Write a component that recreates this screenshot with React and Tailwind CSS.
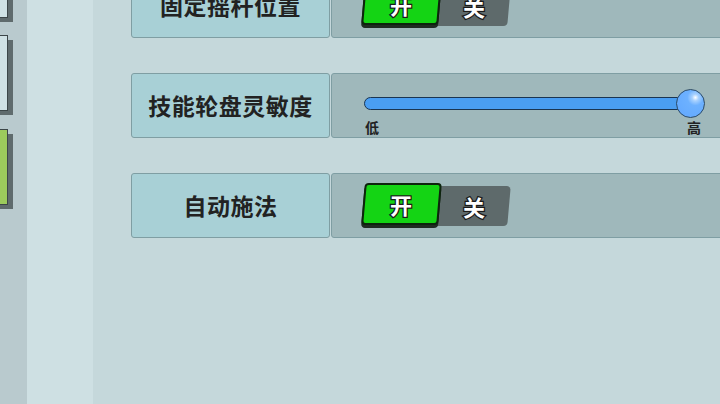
const cjk = { fontFamily: '"Noto Sans CJK SC", "Noto Sans", sans-serif' };

const Tab = ({ fill, className }) => (
  <div className={`relative w-[13px] shrink-0 ${className}`}>
    <div className="absolute left-0 top-[5px] w-[13px] bottom-[-4px] bg-[#5f6b6d]" />
    <div className={`relative h-full w-[8px] border-y border-r border-[#3c4648] ${fill}`} />
  </div>
);

const Toggle = () => (
  <div className="flex items-start pt-[9px] pl-[31px]">
    <div className="relative z-10 flex h-[42px] w-[77px] -skew-x-[5deg] items-center justify-center rounded-[4px] border-2 border-[#0d240d] bg-[#14d414] shadow-[0_3px_0_#1f2b22]">
      <span className="skew-x-[5deg] text-[22px] font-bold text-white [-webkit-text-stroke:2.5px_#1b1b1b] [paint-order:stroke_fill]">
        开
      </span>
    </div>
    <div className="-ml-[6px] mt-[3px] flex h-[40px] w-[75px] -skew-x-[5deg] items-center justify-center rounded-r-[4px] bg-[#5e6a6b] pl-[5px]">
      <span className="skew-x-[5deg] text-[22px] font-bold text-white [-webkit-text-stroke:2.5px_#1b1b1b] [paint-order:stroke_fill]">
        关
      </span>
    </div>
  </div>
);

const Slider = () => (
  <div className="pl-[32px] pt-[15px]">
    <div className="relative h-[29px] w-[342px]">
      <div className="absolute left-0 top-[8px] h-[13px] w-[330px] rounded-l-full border-[1.5px] border-[#1a3552] bg-[#4a9ef2]" />
      <div className="absolute left-[312px] top-0 h-[29px] w-[29px] rounded-full border-[1.5px] border-[#2b4a66] bg-[radial-gradient(circle_at_68%_28%,#ffffff_0,#a9d2ff_12%,#6db1ff_30%,#64aaff_80%)]" />
    </div>
    <div className="mt-[1px] flex w-[342px] justify-between text-[14px] font-bold leading-[16px] text-[#222]">
      <span className="pl-[1px]">低</span>
      <span className="pr-[5px]">高</span>
    </div>
  </div>
);

const Row = ({ label, children }) => (
  <div className="flex h-[65px] shrink-0 gap-[1px]">
    <div className="flex w-[199px] shrink-0 items-center justify-center rounded-[3px] border border-[#7f9ea3] bg-[#a8d0d6] text-[23px] font-bold tracking-[0.5px] text-[#222]">
      {label}
    </div>
    <div className="w-[420px] shrink-0 rounded-[3px] border border-[#7f9ea3] bg-[#9fb8bb]">{children}</div>
  </div>
);

export default function App() {
  return (
    <div className="flex h-[404px] w-[720px] overflow-hidden bg-[#c5d8db]" style={cjk}>
      <div className="flex w-[27px] shrink-0 flex-col bg-[#b9cace]">
        <Tab fill="bg-[#cfe1e4]" className="-mt-[20px] h-[38px]" />
        <Tab fill="bg-[#cfe1e4]" className="mt-[17px] h-[76px]" />
        <Tab fill="bg-[#9ccb5c]" className="mt-[18px] h-[76px]" />
      </div>
      <div className="w-[66px] shrink-0 bg-[#cee0e3]" />
      <div className="-mt-[27px] flex shrink-0 flex-col gap-[35px] pl-[38px]">
        <Row label="固定摇杆位置">
          <Toggle />
        </Row>
        <Row label="技能轮盘灵敏度">
          <Slider />
        </Row>
        <Row label="自动施法">
          <Toggle />
        </Row>
      </div>
    </div>
  );
}
